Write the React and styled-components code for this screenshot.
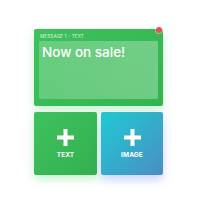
import styled, { createGlobalStyle } from "styled-components";

const Global = createGlobalStyle`
  html, body { margin: 0; padding: 0; background: #fff; }
  body { font-family: "Inter", "Noto Sans", sans-serif; }
`;

const Page = styled.div`
  width: 200px;
  height: 200px;
  padding: 29px 0 0 34px;
  box-sizing: border-box;
`;

const Column = styled.div`
  width: 129px;
  display: flex;
  flex-direction: column;
  gap: 6px;
`;

const Card = styled.div`
  position: relative;
  height: 77px;
  box-sizing: border-box;
  padding: 12px 5px 7px;
  border-radius: 2px;
  background: linear-gradient(135deg, #3fc15d, #32b44f);
  box-shadow: 0 4px 10px rgba(60, 200, 90, 0.28);
  display: flex;
  flex-direction: column;
`;

const Label = styled.div`
  position: absolute;
  top: 4px;
  left: 6px;
  font-size: 4.7px;
  letter-spacing: 0.1px;
  color: rgba(255, 255, 255, 0.85);
  text-transform: uppercase;
`;

const Close = styled.div`
  position: absolute;
  top: -2px;
  right: 1px;
  width: 6px;
  height: 6px;
  border-radius: 50%;
  background: #e8504f;
  box-shadow: 0 0 0 1px rgba(255, 255, 255, 0.35);
`;

const Field = styled.div`
  flex: 1;
  border-radius: 1px;
  background: linear-gradient(90deg, rgba(255, 255, 255, 0.22), rgba(255, 255, 255, 0.3));
  padding: 3px 3px;
  color: #fff;
  font-size: 13.5px;
  font-weight: 500;
  line-height: 16px;
`;

const Tiles = styled.div`
  display: grid;
  grid-template-columns: 63px 62px;
  gap: 4px;
`;

const Tile = styled.div`
  height: 63px;
  border-radius: 2px;
  background: ${(p) => p.$bg};
  box-shadow: ${(p) => p.$shadow};
  display: flex;
  flex-direction: column;
  align-items: center;
  justify-content: center;
  gap: 4px;
  color: #fff;
`;

const TileText = styled.div`
  font-size: 6.5px;
  font-weight: 700;
  letter-spacing: 0.1px;
  margin-top: 1px;
`;

const Plus = () => (
  <svg width="17" height="17" viewBox="0 0 17 17">
    <rect x="6.5" y="0" width="4" height="17" fill="#fff" />
    <rect x="0" y="6.5" width="17" height="4" fill="#fff" />
  </svg>
);

export default function App() {
  return (
    <>
      <Global />
      <Page>
        <Column>
          <Card>
            <Label>Message 1 - Text</Label>
            <Close />
            <Field>Now on sale!</Field>
          </Card>
          <Tiles>
            <Tile
              $bg="linear-gradient(135deg, #3fc25e, #33b04f)"
              $shadow="0 4px 10px rgba(60, 210, 90, 0.3)"
            >
              <Plus />
              <TileText>TEXT</TileText>
            </Tile>
            <Tile
              $bg="linear-gradient(135deg, #1fcad6, #4a8ec2)"
              $shadow="0 5px 10px rgba(80, 120, 230, 0.3)"
            >
              <Plus />
              <TileText>IMAGE</TileText>
            </Tile>
          </Tiles>
        </Column>
      </Page>
    </>
  );
}
